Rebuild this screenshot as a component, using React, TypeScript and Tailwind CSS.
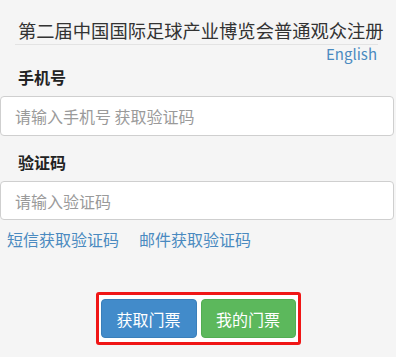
export default function App() {
  return (
    <div className="w-[396px] h-[357px] overflow-hidden bg-[#f5f5f5] font-['Noto_Sans_CJK_SC',sans-serif] text-[#333]">
      {/* 标题 */}
      <div className="ml-[15px] mr-[18px] pt-[20px] pb-[4px] pl-[3px] border-b border-[#e3e3e3] whitespace-nowrap text-[18.3px] leading-[20px]">
        第二届中国国际足球产业博览会普通观众注册
      </div>
      <div className="pr-[19px] text-right text-[15px] leading-[18px] text-[#4a8ac0]">
        <a href="#">English</a>
      </div>

      {/* 手机号 */}
      <div className="pt-[4px] pl-[18px] text-[16px] leading-[20px] font-bold text-[#222]">手机号</div>
      <input
        className="block mt-[9px] w-[394px] h-[40px] rounded-[4px] border border-[#cfcfcf] bg-white px-[14px] text-[16px] outline-none placeholder:text-[#9a9a9a]"
        placeholder="请输入手机号 获取验证码"
      />

      {/* 验证码 */}
      <div className="pt-[16px] pl-[18px] text-[16px] leading-[20px] font-bold text-[#222]">验证码</div>
      <input
        className="block mt-[9px] w-[394px] h-[39px] rounded-[4px] border border-[#cfcfcf] bg-white px-[14px] text-[16px] outline-none placeholder:text-[#9a9a9a]"
        placeholder="请输入验证码"
      />

      <div className="mt-[9px] pl-[7px] flex gap-[20px] text-[16px] leading-[20px] text-[#4a8ac0]">
        <a href="#">短信获取验证码</a>
        <a href="#">邮件获取验证码</a>
      </div>

      {/* 按钮 */}
      <div className="mt-[43px] flex justify-center">
        <div className="flex gap-[4px] border-[3px] border-[#f01616] rounded-[3px] px-[2px] py-[4px] bg-white">
          <button className="w-[96px] h-[39px] rounded-[4px] bg-[#428bca] border border-[#3a7fba] text-white text-[16px]">获取门票</button>
          <button className="w-[95px] h-[39px] rounded-[4px] bg-[#5cb85c] border border-[#52ad52] text-white text-[16px]">我的门票</button>
        </div>
      </div>
    </div>
  );
}
